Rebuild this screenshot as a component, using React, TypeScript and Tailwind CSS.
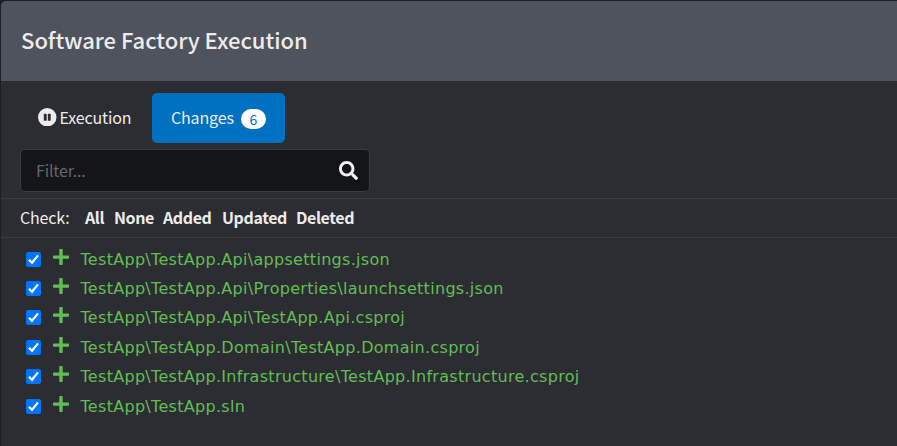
import type { ReactNode } from "react";

const files = [
  "TestApp\\TestApp.Api\\appsettings.json",
  "TestApp\\TestApp.Api\\Properties\\launchsettings.json",
  "TestApp\\TestApp.Api\\TestApp.Api.csproj",
  "TestApp\\TestApp.Domain\\TestApp.Domain.csproj",
  "TestApp\\TestApp.Infrastructure\\TestApp.Infrastructure.csproj",
  "TestApp\\TestApp.sln",
];

function PauseIcon() {
  return (
    <svg viewBox="0 0 512 512" className="size-[18.5px]" fill="#ececec">
      <path
        fillRule="evenodd"
        d="M256 0a256 256 0 1 0 0 512 256 256 0 0 0 0-512Zm-80 160h48q16 0 16 16v160q0 16-16 16h-48q-16 0-16-16V176q0-16 16-16Zm112 0h48q16 0 16 16v160q0 16-16 16h-48q-16 0-16-16V176q0-16 16-16Z"
      />
    </svg>
  );
}

function SearchIcon() {
  return (
    <svg viewBox="0 0 512 512" className="size-[19px]" fill="#f0f0f0">
      <path d="M505 442.7 405.300 343c-4.500-4.500-10.600-7-17-7H372c27.600-35.300 44-79.700 44-128C416 93.100 322.900 0 208 0S0 93.100 0 208s93.100 208 208 208c48.300 0 92.700-16.400 128-44v16.300c0 6.400 2.500 12.500 7 17l99.700 99.700c9.400 9.400 24.600 9.400 33.900 0l28.300-28.300c9.400-9.400 9.400-24.600.1-34zM208 336c-70.700 0-128-57.200-128-128 0-70.700 57.200-128 128-128 70.700 0 128 57.200 128 128 0 70.700-57.200 128-128 128z" />
    </svg>
  );
}

function PlusIcon() {
  return (
    <svg viewBox="0 0 16 16" className="size-4" fill="#63bd55">
      <path d="M7 0h2q.7 0 .7.700v5.700h5.600q.7 0 .7.700v1.900q0 .7-.7.700H9.700v5.600q0 .7-.7.700H7q-.7 0-.7-.7V9.700H.7Q0 9.700 0 9V7.100q0-.7.7-.7h5.600V.7Q6.300 0 7 0Z" />
    </svg>
  );
}

function Checkbox() {
  return (
    <span className="flex size-[15px] items-center justify-center rounded-[2px] bg-[#0075ff]">
      <svg viewBox="0 0 15 15" className="size-[15px]" fill="none" stroke="#fff" strokeWidth="2.2">
        <path d="M3 7.800 6 10.800 12 3.400" />
      </svg>
    </span>
  );
}

function Action({ children, className }: { children: ReactNode; className: string }) {
  return <button className={`text-left font-bold tracking-[-0.4px] ${className}`}>{children}</button>;
}

export default function App() {
  return (
    <div className="h-[446px] w-[897px] overflow-hidden bg-[#1d1e21] pt-px pl-px font-['Noto_Sans_CJK_SC',sans-serif] text-[16px] leading-6 tracking-[-0.15px] whitespace-nowrap text-[#ececec]">
      <div className="h-full overflow-hidden rounded-tl-[5px] bg-[#2c2d32]">
        <header className="flex h-20 items-center bg-[#4f535e] pb-[5px] pl-5">
          <h1 className="text-[22px] leading-8 font-medium tracking-normal">Software Factory Execution</h1>
        </header>
        <nav className="flex h-[62px] pt-3 pl-[37px]">
          <button className="flex w-[114px] items-center gap-[3px] pb-0.5">
            <PauseIcon />
            <span>Execution</span>
          </button>
          <button className="flex h-[50px] w-[133px] items-center gap-[7px] rounded-[5px] bg-[#0070c0] pb-0.5 pl-[19px]">
            <span>Changes</span>
            <span className="mt-[3px] flex h-5 w-[25px] items-center justify-center rounded-full bg-white text-[14px] leading-5 text-[#0070c0]">
              6
            </span>
          </button>
        </nav>
        <div className="h-[55px] pt-[6px] pl-[19px]">
          <div className="flex h-[43px] w-[350px] items-center justify-between rounded-[5px] border border-[#3b3c41] bg-[#141518] pr-[11px] pl-[15px] text-[#66676a]">
            <span className="-mt-0.5">Filter...</span>
            <SearchIcon />
          </div>
        </div>
        <div className="flex h-10 items-center border-y border-[#3b3c41] pb-0.5 pl-[19px]">
          <span className="w-[65px]">Check:</span>
          <Action className="w-[29px]">All</Action>
          <Action className="w-[49px]">None</Action>
          <Action className="w-[59px]">Added</Action>
          <Action className="w-[74px]">Updated</Action>
          <Action className="w-[60px]">Deleted</Action>
        </div>
        <ul className="pt-[6.4px] pl-[25px] font-[Verdana,'DejaVu_Sans',sans-serif] text-[16px] tracking-[0.3px] text-[#63bd55]">
          {files.map((file) => (
            <li key={file} className="flex h-[29.4px] items-center">
              <Checkbox />
              <span className="mr-[11.5px] -mt-[5px] ml-3">
                <PlusIcon />
              </span>
              <span className="mt-[1.2px]">{file}</span>
            </li>
          ))}
        </ul>
      </div>
    </div>
  );
}
